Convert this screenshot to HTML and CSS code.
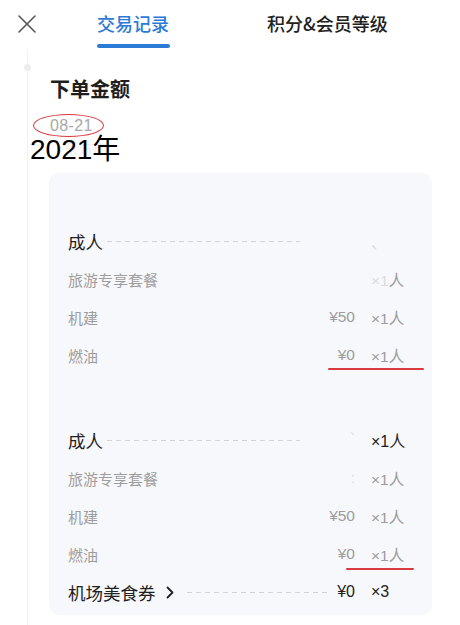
FILE: index.html
```html
<!DOCTYPE html>
<html lang="zh">
<head>
<meta charset="utf-8">
<link rel="stylesheet" href="styles.css">
</head>
<body>
<div class="page">
  <header class="nav">
    <svg class="close" width="18" height="18" viewBox="0 0 18 18"><path d="M1 1L17 17M17 1L1 17" stroke="#555" stroke-width="1.6" fill="none" stroke-linecap="round"/></svg>
    <div class="tab active">交易记录</div>
    <div class="tab">积分&amp;会员等级</div>
  </header>

  <section class="timeline">
    <span class="dot"></span>
    <h2 class="title">下单金额</h2>
    <div class="date">08-21</div>
    <div class="loc">东方市</div>

    <div class="card">
      <div class="group">
        <div class="row blank"></div>
        <div class="row main">
          <span class="label">成人</span><span class="dash"></span><span class="price empty"></span><span class="qty faint">、</span>
        </div>
        <div class="row sub">
          <span class="label">旅游专享套餐</span><span class="price"></span><span class="qty"><span class="faint">×1</span>人</span>
        </div>
        <div class="row sub">
          <span class="label">机建</span><span class="price">¥50</span><span class="qty">×1人</span>
        </div>
        <div class="row sub">
          <span class="label">燃油</span><span class="price">¥0</span><span class="qty">×1人</span>
        </div>
      </div>
      <div class="group">
        <div class="row blank"></div>
        <div class="row main">
          <span class="label">成人</span><span class="dash"></span><span class="price empty faint">`</span><span class="qty">×1人</span>
        </div>
        <div class="row sub">
          <span class="label">旅游专享套餐</span><span class="price faint">:</span><span class="qty">×1人</span>
        </div>
        <div class="row sub">
          <span class="label">机建</span><span class="price">¥50</span><span class="qty">×1人</span>
        </div>
        <div class="row sub">
          <span class="label">燃油</span><span class="price">¥0</span><span class="qty">×1人</span>
        </div>
        <div class="row main">
          <span class="label">机场美食券</span>
          <svg class="chev" width="8" height="13" viewBox="0 0 8 13"><path d="M1.5 1.5L6.5 6.5L1.5 11.5" stroke="#222" stroke-width="1.8" fill="none" stroke-linecap="round" stroke-linejoin="round"/></svg>
          <span class="dash wide"></span><span class="price">¥0</span><span class="qty">×3</span>
        </div>
      </div>
    </div>
  </section>

  <div class="mark-ellipse"></div>
  <div class="mark-year">2021年</div>
  <div class="mark-line one"></div>
  <div class="mark-line two"></div>
</div>
</body>
</html>
```

FILE: styles.css
```css
* { box-sizing: border-box; }
html, body { margin: 0; padding: 0; background: #fff; }
body {
  font-family: "Liberation Sans", "Noto Sans CJK SC", sans-serif;
  color: #222;
  width: 460px;
  height: 625px;
  overflow: hidden;
}
.page { position: relative; width: 460px; height: 625px; }

.nav {
  height: 50px;
  display: flex;
  align-items: flex-start;
  padding-left: 18px;
}
.close { margin-top: 15px; flex: none; }
.tab {
  font-size: 18px;
  line-height: 26px;
  margin-top: 10px;
  font-weight: 500;
  color: #222;
  font-family: "Noto Sans CJK SC", sans-serif;
  position: relative;
}
.tab.active {
  color: #2b7bd6;
  margin-left: 61px;
  margin-right: 98px;
}
.tab.active::after {
  content: "";
  position: absolute;
  left: 0;
  right: -1px;
  top: 34px;
  height: 4px;
  border-radius: 2px;
  background: #2b7bd6;
}

.timeline {
  position: relative;
  margin-left: 27px;
  border-left: 1.5px solid #f1f1f1;
  padding: 26px 28px 0 21px;
  height: 575px;
}
.dot {
  position: absolute;
  left: -4.5px;
  top: 14px;
  width: 7px;
  height: 7px;
  border-radius: 50%;
  background: #ececec;
}
.title {
  margin: 0 0 0 1px;
  font-size: 20px;
  line-height: 26px;
  font-weight: 700;
  color: #1e1e1e;
  font-family: "Noto Sans CJK SC", sans-serif;
}
.date {
  margin: 14px 0 0 1px;
  font-size: 16px;
  line-height: 20px;
  color: #a8a8a8;
  letter-spacing: 0.4px;
}
.loc {
  margin: 2px 0 0 14px;
  font-size: 15px;
  line-height: 20px;
  color: #ececec;
  font-family: "Noto Sans CJK SC", sans-serif;
}
.card {
  margin-top: 15px;
  background: #f7f8fb;
  border-radius: 10px;
  padding: 11px 21px 4px 19px;
  width: 383px;
}
.group + .group { margin-top: 9px; }
.row {
  height: 38px;
  display: flex;
  align-items: center;
  font-family: "Liberation Sans", "Noto Sans CJK SC", sans-serif;
}
.row.main { font-size: 17.5px; color: #222; }
.row.sub { font-size: 15.5px; color: #9d9d9d; }
.row.sub .label { flex: 1; font-size: 15px; }
.label { font-family: "Noto Sans CJK SC", sans-serif; }
.dash {
  flex: 1;
  height: 1px;
  margin: 0 10px 0 4px;
  background: repeating-linear-gradient(to right, #d4d4d4 0 5px, transparent 5px 9px);
}
.dash.wide { margin-left: 13px; }
.chev { margin-left: 10px; flex: none; }
.price { text-align: right; }
.price.empty { min-width: 45px; }
.qty { width: 40px; margin-left: 16px; text-align: left; }
.row.main .qty, .row.main .price { font-size: 16px; }
.faint { color: #dcdcdc; }

.mark-ellipse {
  position: absolute;
  left: 33px;
  top: 114px;
  width: 71px;
  height: 23px;
  border: 1.8px solid #d8393f;
  border-radius: 50%;
}
.mark-year {
  position: absolute;
  left: 30px;
  top: 134px;
  font-size: 28px;
  line-height: 32px;
  color: #000;
  font-family: "Liberation Sans", "Noto Sans CJK SC", sans-serif;
}
.mark-line {
  position: absolute;
  height: 2px;
  border-radius: 1px;
  background: #d8393f;
}
.mark-line.one { left: 328px; top: 368px; width: 96px; }
.mark-line.two { left: 346px; top: 568px; width: 68px; }
```
